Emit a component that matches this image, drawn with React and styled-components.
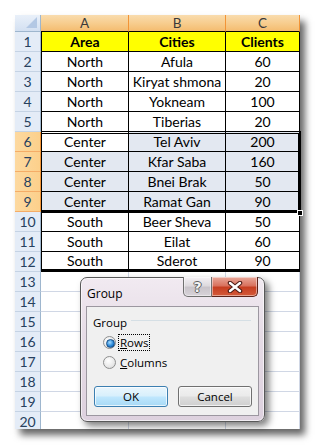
import React from "react";
import styled, { createGlobalStyle } from "styled-components";

const GlobalStyle = createGlobalStyle`
  html, body { margin: 0; padding: 0; background: #fff; }
  * { box-sizing: border-box; }
`;

const Page = styled.div`
  width: 315px;
  height: 445px;
  padding: 15px 0 0 15px;
  background: #fff;
  overflow: hidden;
`;

const Sheet = styled.div`
  position: relative;
  width: 285px;
  height: 414px;
  overflow: visible;
  box-shadow: 5px 6px 7px rgba(0, 0, 0, 0.6);
`;

const Clip = styled.div`
  width: 285px;
  height: 414px;
  overflow: hidden;
  background: #fff;
`;

const Grid = styled.div`
  display: grid;
  grid-template-columns: 26px 88px 97px 74px;
  grid-auto-rows: 20px;
  grid-template-rows: 17px;
  font-family: Lato, "Liberation Sans", sans-serif;
  font-size: 14px;
  color: #000;
`;

const Corner = styled.div`
  position: relative;
  background: linear-gradient(#e9f0f9, #d3e0f1);
  border-right: 1px solid #9eb6ce;
  border-bottom: 1px solid #9eb6ce;
  &::after {
    content: "";
    position: absolute;
    right: 3px;
    bottom: 3px;
    width: 0;
    height: 0;
    border-left: 11px solid transparent;
    border-bottom: 11px solid #b3c8e4;
  }
`;

const ColHeader = styled.div`
  display: flex;
  align-items: center;
  justify-content: center;
  background: linear-gradient(#f9dcae, #f7cc8c 55%, #f4bc6f);
  border-right: 1px solid #f29436;
  border-bottom: 1px solid #000;
  color: #3a3a3a;
  font-size: 13.5px;
`;

const RowHeader = styled.div`
  display: flex;
  align-items: flex-end;
  justify-content: center;
  padding-bottom: 1px;
  background: ${(p) => (p.$selected ? "linear-gradient(90deg, #fdd9a0, #fcd08b)" : "#e4ecf7")};
  border-right: 1px solid ${(p) => (p.$selected ? "#f29436" : "#9eb6ce")};
  border-bottom: 1px solid ${(p) => (p.$selected ? "#f5ad67" : "#c5d3e4")};
  color: #27415f;
  font-size: 14px;
`;

const Cell = styled.div`
  display: flex;
  align-items: flex-end;
  justify-content: center;
  white-space: nowrap;
  overflow: hidden;
  font-weight: ${(p) => (p.$head ? 700 : 400)};
  background: ${(p) => (p.$head ? "#ffff00" : p.$sel ? "#e3e8f1" : "#fff")};
  border-right: 1px solid ${(p) => (p.$empty ? "#d0d7e5" : "#000")};
  border-bottom: ${(p) => (p.$thick ? "3px solid #000" : p.$empty ? "1px solid #d0d7e5" : "1px solid #000")};
  border-left: ${(p) => (p.$first && !p.$empty ? "1px solid #000" : "none")};
  padding-bottom: ${(p) => (p.$thick ? "0" : "1px")};
`;

const Selection = styled.div`
  position: absolute;
  left: 27px;
  top: 116px;
  width: 259px;
  height: 82px;
  border: 3px double #000;
  border-left: none;
  pointer-events: none;
`;

const FillHandle = styled.div`
  position: absolute;
  left: 282px;
  top: 195px;
  width: 6px;
  height: 6px;
  background: #000;
  border: 1px solid #fff;
`;

/* Dialog */
const Dialog = styled.div`
  position: absolute;
  left: 65px;
  top: 262px;
  width: 185px;
  height: 145px;
  display: flex;
  flex-direction: column;
  border: 1px solid #585858;
  border-radius: 7px;
  background: linear-gradient(180deg, #f1eaf1 0%, #e6dce6 40%, #ddd1de 100%);
  box-shadow: inset 0 0 0 1px rgba(255, 255, 255, 0.6), 4px 4px 7px rgba(0, 0, 0, 0.5);
  font-family: "Open Sans", "Noto Sans", sans-serif;
  font-size: 11.5px;
  color: #000;
`;

const TitleBar = styled.div`
  height: 28px;
  display: flex;
  justify-content: space-between;
  align-items: flex-start;
  padding: 0 6px 0 6px;
`;

const Title = styled.div`
  padding-top: 7px;
  font-size: 12px;
`;

const Caption = styled.div`
  display: flex;
  margin-top: -1px;
`;

const CaptionButton = styled.div`
  height: 20px;
  width: ${(p) => (p.$close ? "46px" : "29px")};
  display: flex;
  align-items: center;
  justify-content: center;
  border: 1px solid ${(p) => (p.$close ? "#5c2219" : "#707070")};
  border-top: none;
  border-left: ${(p) => (p.$close ? "none" : "1px solid #707070")};
  border-radius: ${(p) => (p.$close ? "0 0 5px 0" : "0 0 0 5px")};
  background: ${(p) =>
    p.$close
      ? "linear-gradient(180deg, #e8a89a 0%, #d9735f 45%, #c63f22 55%, #d45a3a 100%)"
      : "linear-gradient(180deg, #f4f1f5 0%, #dedade 45%, #c9c4ca 55%, #d8d3d9 100%)"};
  box-shadow: inset 0 0 0 1px rgba(255, 255, 255, 0.45);
`;

const HelpGlyph = styled.span`
  font-family: "DejaVu Sans", sans-serif;
  font-weight: 700;
  font-size: 14px;
  line-height: 1;
  color: #f4f4f4;
  text-shadow: 1px 0 0 #5e5e5e, -1px 0 0 #5e5e5e, 0 1px 0 #5e5e5e, 0 -1px 0 #5e5e5e;
`;

const Client = styled.div`
  flex: 1;
  margin: 0 5px 5px 5px;
  border: 1px solid #9c97a0;
  background: #f0f0f0;
  padding: 7px 6px 8px 6px;
  display: flex;
  flex-direction: column;
`;

const GroupHeader = styled.div`
  display: flex;
  align-items: center;
  gap: 4px;
  height: 16px;
`;

const GroupLine = styled.div`
  flex: 1;
  height: 1px;
  margin-right: 1px;
  margin-top: -3px;
  background: #d5dfe5;
`;

const RadioList = styled.div`
  display: flex;
  flex-direction: column;
  margin: 2px 0 0 10px;
`;

const RadioRow = styled.div`
  height: 20px;
  display: flex;
  align-items: center;
  gap: 2px;
`;

const RadioCircle = styled.span`
  position: relative;
  width: 13px;
  height: 13px;
  border-radius: 50%;
  border: 1px solid #8e8f8f;
  background: radial-gradient(circle at 40% 35%, #ffffff, #e8e8e8 60%, #cfcfcf);
  &::after {
    content: "";
    display: ${(p) => (p.$checked ? "block" : "none")};
    position: absolute;
    left: 2px;
    top: 2px;
    width: 7px;
    height: 7px;
    border-radius: 50%;
    border: 0.5px solid #1b4f84;
    background: radial-gradient(circle at 40% 35%, #a5dcff, #2b88d8 55%, #0d4f96);
  }
`;

const RadioLabel = styled.span`
  padding: 0 1px;
  border: 1px dotted ${(p) => (p.$focus ? "#000" : "transparent")};
  line-height: 15px;
  u { text-decoration: underline; text-underline-offset: 1px; }
`;

const Buttons = styled.div`
  display: flex;
  gap: 10px;
  margin: auto 0 0 1px;
`;

const Button = styled.div`
  width: 74px;
  height: 21px;
  display: flex;
  align-items: center;
  justify-content: center;
  border-radius: 3px;
  border: 1px solid ${(p) => (p.$primary ? "#3c7fb1" : "#707070")};
  background: ${(p) =>
    p.$primary
      ? "linear-gradient(180deg, #eaf6fd 0%, #d9f0fc 45%, #bee6fd 55%, #a7d9f5 100%)"
      : "linear-gradient(180deg, #f2f2f2 0%, #ebebeb 45%, #dddddd 55%, #cfcfcf 100%)"};
  box-shadow: inset 0 0 0 1px rgba(255, 255, 255, 0.7);
`;

const data = [
  ["Area", "Cities", "Clients"],
  ["North", "Afula", "60"],
  ["North", "Kiryat shmona", "20"],
  ["North", "Yokneam", "100"],
  ["North", "Tiberias", "20"],
  ["Center", "Tel Aviv", "200"],
  ["Center", "Kfar Saba", "160"],
  ["Center", "Bnei Brak", "50"],
  ["Center", "Ramat Gan", "90"],
  ["South", "Beer Sheva", "50"],
  ["South", "Eilat", "60"],
  ["South", "Sderot", "90"],
];

export default function App() {
  const rows = [];
  for (let r = 1; r <= 20; r++) {
    const selected = r >= 6 && r <= 9;
    const values = data[r - 1];
    rows.push(<RowHeader key={`h${r}`} $selected={selected}>{r}</RowHeader>);
    for (let c = 0; c < 3; c++) {
      const empty = !values;
      rows.push(
        <Cell
          key={`c${r}-${c}`}
          $empty={empty}
          $first={c === 0}
          $head={r === 1}
          $sel={selected && !(r === 6 && c === 0)}
          $thick={r === 12}
        >
          {values ? values[c] : ""}
        </Cell>
      );
    }
  }

  return (
    <>
      <GlobalStyle />
      <Page>
        <Sheet>
          <Clip>
            <Grid>
              <Corner />
              <ColHeader>A</ColHeader>
              <ColHeader>B</ColHeader>
              <ColHeader>C</ColHeader>
              {rows}
            </Grid>
          </Clip>
          <Selection />
          <FillHandle />
          <Dialog>
            <TitleBar>
              <Title>Group</Title>
              <Caption>
                <CaptionButton>
                  <HelpGlyph>?</HelpGlyph>
                </CaptionButton>
                <CaptionButton $close>
                  <svg width="16" height="12" viewBox="0 0 16 12">
                    <path d="M3 2 L13 10 M13 2 L3 10" stroke="#4a1a14" strokeWidth="4.5" strokeLinecap="round" fill="none" />
                    <path d="M3 2 L13 10 M13 2 L3 10" stroke="#ffffff" strokeWidth="2.4" strokeLinecap="round" fill="none" />
                  </svg>
                </CaptionButton>
              </Caption>
            </TitleBar>
            <Client>
              <GroupHeader>
                <span>Group</span>
                <GroupLine />
              </GroupHeader>
              <RadioList>
                <RadioRow>
                  <RadioCircle $checked />
                  <RadioLabel $focus><u>R</u>ows</RadioLabel>
                </RadioRow>
                <RadioRow>
                  <RadioCircle />
                  <RadioLabel><u>C</u>olumns</RadioLabel>
                </RadioRow>
              </RadioList>
              <Buttons>
                <Button $primary>OK</Button>
                <Button>Cancel</Button>
              </Buttons>
            </Client>
          </Dialog>
        </Sheet>
      </Page>
    </>
  );
}
